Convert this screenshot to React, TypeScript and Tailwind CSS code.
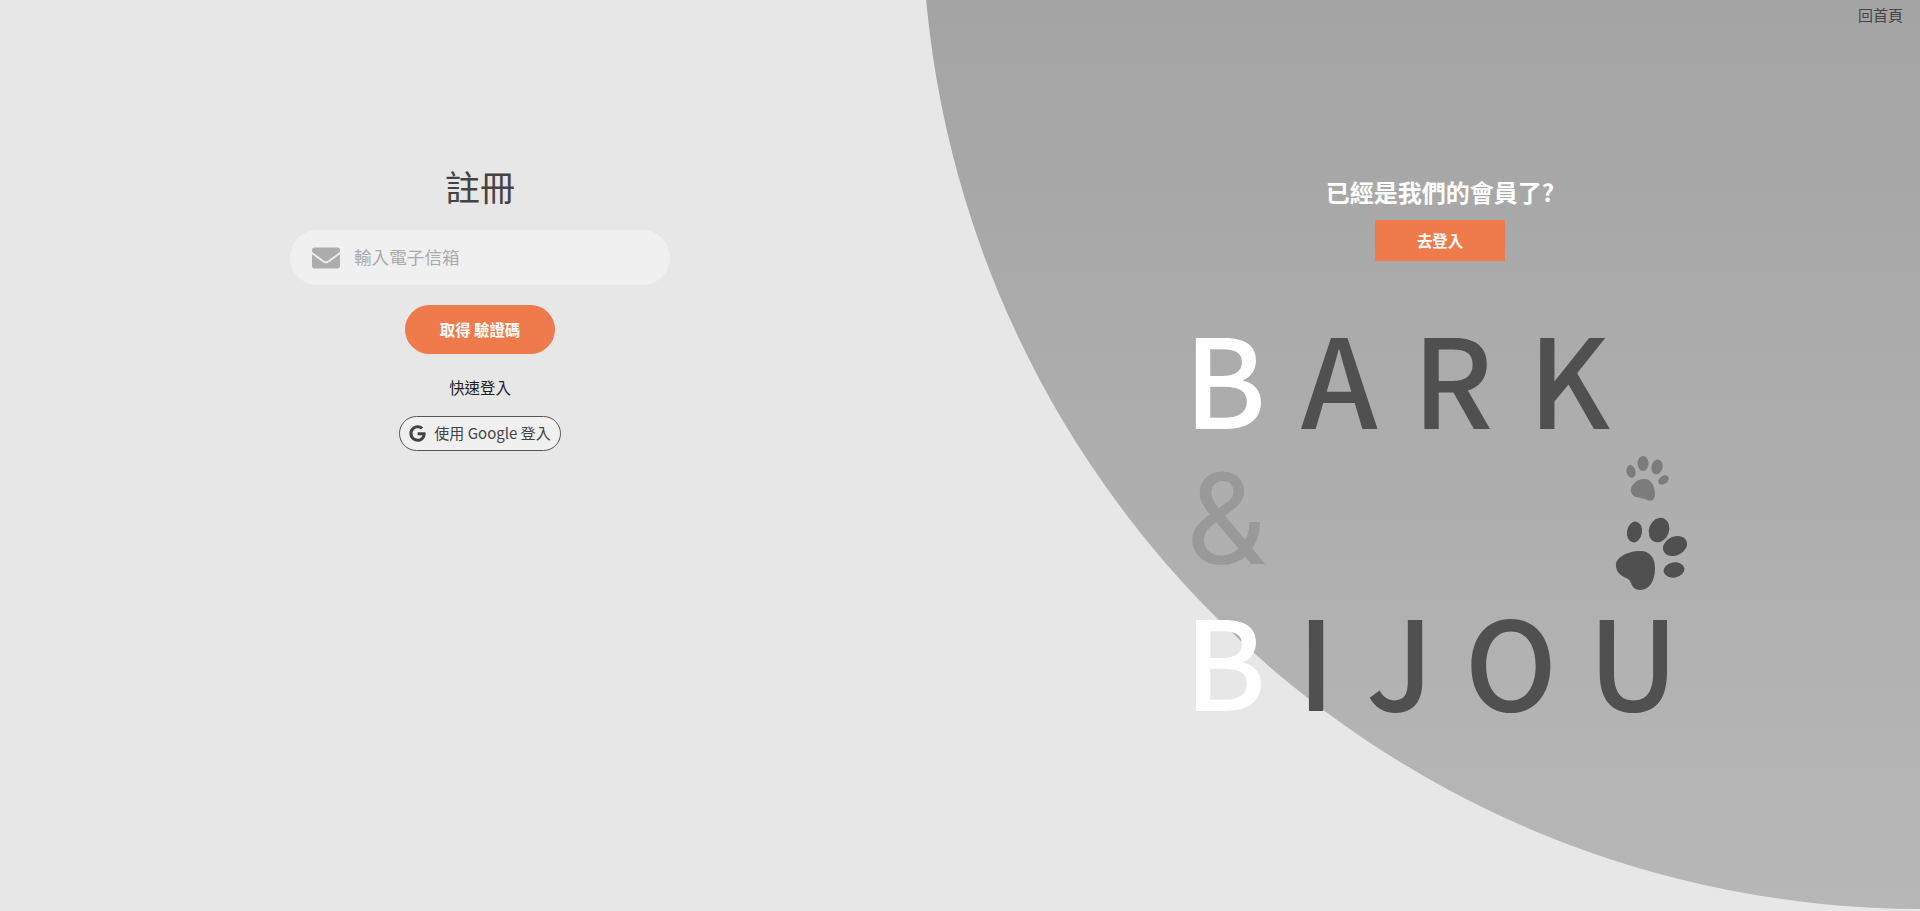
import React from 'react';
import { FaEnvelope, FaGoogle } from 'react-icons/fa';

const font = "font-['Noto_Sans_CJK_TC','Noto_Sans',sans-serif]";

const PawPrints = () => (
  <svg className="absolute left-[406px] top-[135px] w-[130px] h-[160px]" viewBox="0 0 130 160">
    <g fill="#7c7c7c">
      <ellipse cx="41" cy="31.5" rx="4.5" ry="6.5" transform="rotate(-15 41 31.5)" />
      <ellipse cx="53" cy="23.5" rx="5.5" ry="7.5" />
      <ellipse cx="67" cy="27" rx="5.5" ry="7.5" transform="rotate(15 67 27)" />
      <ellipse cx="73.5" cy="40" rx="5.8" ry="4" transform="rotate(-35 73.5 40)" />
      <path d="M41 52C39 47 46 39 54 39C62 39 65 47 65 54C65 60 61 62 57 60C53 58 50 58 46 57C43 56 42 54 41 52Z" />
    </g>
    <g fill="#505050">
      <ellipse cx="44.5" cy="92" rx="7.5" ry="10.5" transform="rotate(10 44.5 92)" />
      <ellipse cx="69" cy="90" rx="10" ry="12.5" transform="rotate(20 69 90)" />
      <ellipse cx="85" cy="106" rx="12.5" ry="9.5" transform="rotate(-25 85 106)" />
      <ellipse cx="84" cy="130" rx="10.5" ry="7.5" transform="rotate(-10 84 130)" />
      <path d="M26 126C25 118 36 112 48 111C60 110 65 118 65 128C65 140 60 150 50 150C44 150 42 146 40 141C38 137 27 137 26 126Z" />
    </g>
  </svg>
);

const Logo = () => (
  <div className="relative mt-[44px] self-start ml-[224px] text-[123px] font-medium leading-[141px] text-[#505050] whitespace-nowrap">
    <div className="tracking-[35px]"><span className="text-white">B</span>ARK</div>
    <div className="h-[141px] pt-[4px] pl-[2px] font-['Roboto',sans-serif] text-[128px] font-normal text-[#999999]">&amp;</div>
    <div className="tracking-[31px]"><span className="text-white">B</span>IJOU</div>
    <PawPrints />
  </div>
);

export default function App() {
  return (
    <div className={`relative h-screen w-full overflow-hidden bg-[#e7e7e7] ${font}`}>
      <div className="absolute left-[48%] bottom-[calc(100%-909px)] w-[2000px] h-[2000px] rounded-full bg-gradient-to-b from-[#a4a4a4] from-55% to-[#b7b7b7]" />

      <a className="absolute right-[17px] top-[3px] text-[15px] leading-6 text-[#444444]">回首頁</a>

      <div className="relative grid grid-cols-2 h-full">
        <div className="flex flex-col items-center pt-[161px]">
          <h2 className="text-[35px] leading-[50px] text-[#444444]">註冊</h2>
          <div className="mt-[19px] flex items-center w-[380px] h-[55px] rounded-full bg-[#f0f0f0] pl-[22px]">
            <FaEnvelope size={28} className="text-[#acacac]" />
            <span className="ml-[14px] text-[17.6px] text-[#aaaaaa]">輸入電子信箱</span>
          </div>
          <button className="mt-[20px] w-[150px] h-[49px] rounded-full bg-[#ef7b4c] text-[15.4px] font-bold text-white">
            取得 驗證碼
          </button>
          <p className="mt-[22px] text-[15.4px] leading-[22px] text-[#222222]">快速登入</p>
          <button className="mt-[18px] flex items-center justify-center gap-[8px] w-[162px] h-[35px] rounded-full border border-[#555555] bg-[#f0f0f0] text-[15px] text-[#444444]">
            <FaGoogle size={17} className="text-[#444444]" />
            使用 Google 登入
          </button>
        </div>

        <div className="flex flex-col items-center pt-[174px]">
          <h3 className="text-[24px] leading-9 font-bold text-white">已經是我們的會員了?</h3>
          <button className="mt-[10px] w-[130px] h-[41px] bg-[#ef7b4c] text-[15.4px] font-bold text-white">
            去登入
          </button>
          <Logo />
        </div>
      </div>
    </div>
  );
}
